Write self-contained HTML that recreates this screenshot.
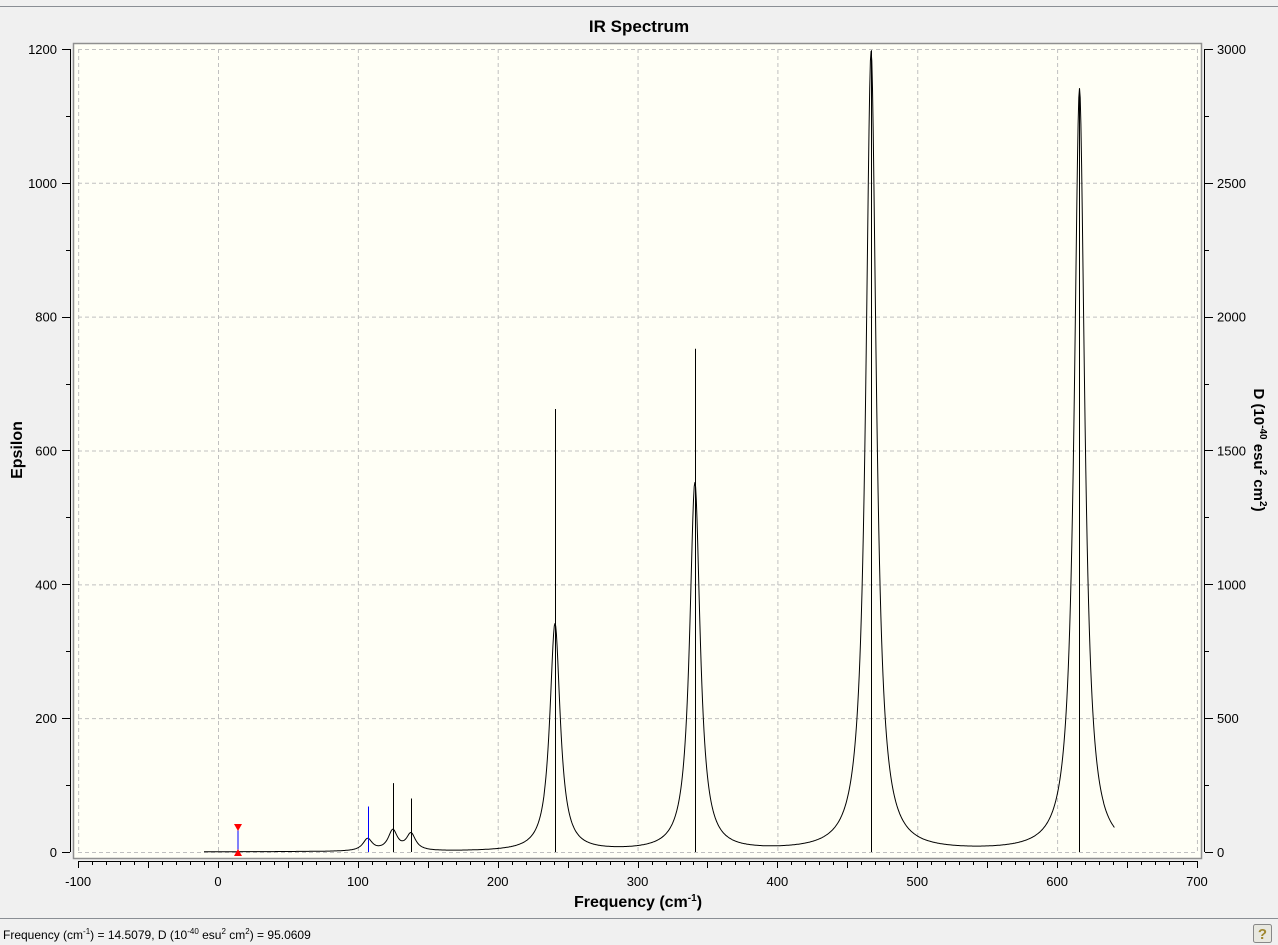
<!DOCTYPE html>
<html><head><meta charset="utf-8"><style>
body{margin:0;width:1278px;height:945px;background:#f0f0f0;font-family:"Liberation Sans",sans-serif;overflow:hidden;position:relative}
</style></head><body>
<svg width="1278" height="945" style="position:absolute;left:0;top:0" font-family="Liberation Sans, sans-serif">
<line x1="0" y1="6.5" x2="1278" y2="6.5" stroke="#8a8e94"/>
<text x="639" y="32" text-anchor="middle" font-size="17" font-weight="bold">IR Spectrum</text>
<rect x="73.5" y="43.5" width="1128" height="815" fill="#fffff6" stroke="#8f8f8f" stroke-width="1.5"/>
<g id="grid" stroke="#c0c0c0" stroke-dasharray="4,3" fill="none"></g>
<g id="axes" stroke="#000" fill="none"></g>
<g id="labels" font-size="13" fill="#000"></g>
<path id="curve" fill="none" stroke="#000" stroke-width="1"/>
<g id="sticks"></g>
<line x1="238" y1="828" x2="238" y2="852" stroke="#00f"/>
<polygon points="234,824 242,824 238,831" fill="red"/>
<polygon points="234,856 242,856 238,849" fill="red"/>
<text x="638" y="907" text-anchor="middle" font-size="16" font-weight="bold">Frequency (cm<tspan dy="-6" font-size="10">-1</tspan><tspan dy="6">)</tspan></text>
<text transform="translate(22,450) rotate(-90)" text-anchor="middle" font-size="16" font-weight="bold">Epsilon</text>
<text transform="translate(1254,450) rotate(90)" text-anchor="middle" font-size="15" font-weight="bold">D (10<tspan dy="-6" font-size="10">-40</tspan><tspan dy="6"> esu</tspan><tspan dy="-6" font-size="10">2</tspan><tspan dy="6"> cm</tspan><tspan dy="-6" font-size="10">2</tspan><tspan dy="6">)</tspan></text>
<line x1="0" y1="918.5" x2="1278" y2="918.5" stroke="#8a8e94"/>
<text x="3" y="939" font-size="12">Frequency (cm<tspan dy="-5" font-size="8">-1</tspan><tspan dy="5">) = 14.5079, D (10</tspan><tspan dy="-5" font-size="8">-40</tspan><tspan dy="5"> esu</tspan><tspan dy="-5" font-size="8">2</tspan><tspan dy="5"> cm</tspan><tspan dy="-5" font-size="8">2</tspan><tspan dy="5">) = 95.0609</tspan></text>
<rect x="1253.5" y="924.5" width="18" height="18" rx="2" fill="#e8e8e0" stroke="#888"/>
<text x="1262.5" y="939" text-anchor="middle" font-size="15" font-weight="bold" fill="#a08830">?</text>
</svg>
<script>
const X=v=>218+v*1.3985, Y=e=>852-e*0.6692;
const ns="http://www.w3.org/2000/svg";
function el(p,t,a,txt){const e=document.createElementNS(ns,t);for(const k in a)e.setAttribute(k,a[k]);if(txt!=null)e.textContent=txt;document.getElementById(p).appendChild(e);}
for(let v=-100;v<=700;v+=100){el("grid","line",{x1:X(v)+.5,y1:49,x2:X(v)+.5,y2:852});el("labels","text",{x:X(v),y:886,"text-anchor":"middle"},v);}
for(let e=0;e<=1200;e+=200){el("grid","line",{x1:78,y1:Y(e)+.5,x2:1197,y2:Y(e)+.5});
el("labels","text",{x:57,y:Y(e)+5,"text-anchor":"end"},e);el("labels","text",{x:1217,y:Y(e)+5},e*2.5);}
el("axes","line",{x1:70.5,y1:49,x2:70.5,y2:852});el("axes","line",{x1:1204.5,y1:49,x2:1204.5,y2:852});
for(let e=0;e<=1200;e+=100){const y=Math.round(Y(e))+.5;el("axes","line",{x1:e%200?66:62,y1:y,x2:70,y2:y});el("axes","line",{x1:1205,y1:y,x2:e%200?1209:1213,y2:y});}
el("axes","line",{x1:78,y1:861.5,x2:1197,y2:861.5});
for(let v=-100;v<=700;v+=10){const x=Math.round(X(v))+.5;el("axes","line",{x1:x,y1:861,x2:x,y2:v%50?865:868});}
const pk=[[107,18],[125,30],[138,25],[241,340],[341,550],[467,1195],[616,1140]];
let d="";for(let v=-10;v<=641;v+=0.5){let s=0;for(const[c,h]of pk){const g=c>200?4.5:4;s+=h*g*g/((v-c)**2+g*g);}d+=(d?"L":"M")+X(v).toFixed(1)+","+Y(s).toFixed(1);}
document.getElementById("curve").setAttribute("d",d);
const st=[[107,68,"#00f"],[125,103,"#000"],[138,80,"#000"],[241,662,"#000"],[341,752,"#000"],[467,1198,"#000"],[616,1140,"#000"]];
for(const[c,h,col]of st)el("sticks","line",{x1:Math.round(X(c))+.5,y1:852,x2:Math.round(X(c))+.5,y2:Y(h),stroke:col});
</script>
</body></html>
